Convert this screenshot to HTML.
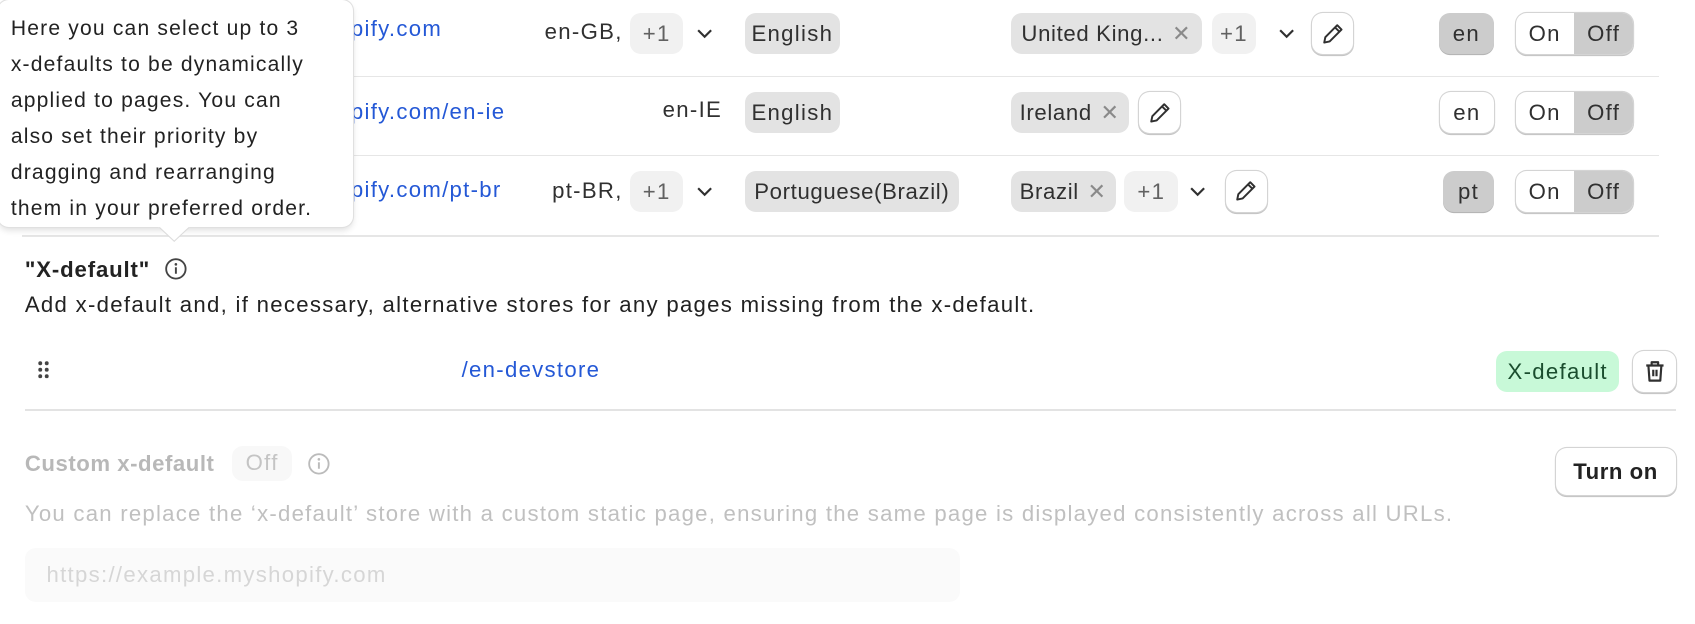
<!DOCTYPE html>
<html><head><meta charset="utf-8"><style>
html,body{margin:0;padding:0;background:#fff;overflow:hidden}
body{width:1568px;height:577px;zoom:1.081;position:relative;font-family:"Liberation Sans",Arial,sans-serif;font-size:20.5px;letter-spacing:1.2px;color:#303030;line-height:24px}
.a{position:absolute;white-space:nowrap}
.chip{position:absolute;height:38px;line-height:38px;border-radius:10px;background:#e3e3e3;box-sizing:border-box;text-align:center;white-space:nowrap;overflow:hidden}
.plus{background:#f1f1f1;color:#616161}
.btn{position:absolute;height:38px;border-radius:10px;background:#fff;box-shadow:0 0 0 1px #d4d4d4,0 1px 0 1px #c4c4c4;box-sizing:border-box;text-align:center;line-height:38px}
.line{position:absolute;height:1px;background:#e6e6e6}
.blue{color:#2458d6}
.x{color:#8a8a8a;margin-left:8px}
</style></head><body>
<div class="line" style="left:20px;width:1515px;top:70px"></div>
<div class="line" style="left:20px;width:1515px;top:143px"></div>
<div class="line" style="left:20px;width:1515px;top:217px;height:2px"></div>

<div class="a blue" style="left:312px;top:15px">opify.com</div>
<div class="a blue" style="left:312px;top:92px">opify.com/en-ie</div>
<div class="a blue" style="left:312px;top:164px">opify.com/pt-br</div>

<div class="a" style="right:992px;top:18px">en-GB,</div>
<div class="chip plus" style="left:583px;top:12px;width:49px">+1</div>
<svg class="a" style="left:644px;top:25px" width="16" height="12"><path d="M2 3l6 6 6-6" fill="none" stroke="#303030" stroke-width="2"/></svg>
<div class="chip" style="left:689px;top:12px;width:88px">English</div>

<div class="a" style="right:900px;top:90px">en-IE</div>
<div class="chip" style="left:689px;top:85px;width:88px">English</div>

<div class="a" style="right:992px;top:165px">pt-BR,</div>
<div class="chip plus" style="left:583px;top:158px;width:49px">+1</div>
<svg class="a" style="left:644px;top:171px" width="16" height="12"><path d="M2 3l6 6 6-6" fill="none" stroke="#303030" stroke-width="2"/></svg>
<div class="chip" style="left:689px;top:158px;width:198px;letter-spacing:0.6px">Portuguese(Brazil)</div>

<div class="chip" style="left:935px;top:12px;width:177px;letter-spacing:0.6px">United King...<span class="x">✕</span></div>
<div class="chip plus" style="left:1121px;top:12px;width:41px">+1</div>
<svg class="a" style="left:1182px;top:25px" width="16" height="12"><path d="M2 3l6 6 6-6" fill="none" stroke="#303030" stroke-width="2"/></svg>
<div class="btn" style="left:1214px;top:12px;width:38px"><svg width="22" height="22" style="margin-top:8px" viewBox="0 0 22 22"><path d="M15 3l4 4-11 11-5 1 1-5z M13 5l4 4" fill="none" stroke="#303030" stroke-width="1.8" stroke-linejoin="round"/></svg></div>

<div class="chip" style="left:935px;top:85px;width:109px;letter-spacing:0.6px">Ireland<span class="x">✕</span></div>
<div class="btn" style="left:1054px;top:85px;width:38px"><svg width="22" height="22" style="margin-top:8px" viewBox="0 0 22 22"><path d="M15 3l4 4-11 11-5 1 1-5z M13 5l4 4" fill="none" stroke="#303030" stroke-width="1.8" stroke-linejoin="round"/></svg></div>

<div class="chip" style="left:935px;top:158px;width:97px;letter-spacing:0.6px">Brazil<span class="x">✕</span></div>
<div class="chip plus" style="left:1040px;top:158px;width:50px">+1</div>
<svg class="a" style="left:1100px;top:171px" width="16" height="12"><path d="M2 3l6 6 6-6" fill="none" stroke="#303030" stroke-width="2"/></svg>
<div class="btn" style="left:1134px;top:158px;width:38px"><svg width="22" height="22" style="margin-top:8px" viewBox="0 0 22 22"><path d="M15 3l4 4-11 11-5 1 1-5z M13 5l4 4" fill="none" stroke="#303030" stroke-width="1.8" stroke-linejoin="round"/></svg></div>

<div class="chip" style="left:1331px;top:12px;width:51px;background:#cccccc;box-shadow:0 1px 0 #b5b5b5">en</div>
<div class="btn" style="left:1332px;top:85px;width:50px">en</div>
<div class="chip" style="left:1335px;top:158px;width:47px;background:#cccccc;box-shadow:0 1px 0 #b5b5b5">pt</div>

<div class="btn" style="left:1402px;top:12px;width:109px;overflow:hidden;text-align:left;white-space:nowrap"><span style="display:inline-block;width:54px;text-align:center">On</span><span style="display:inline-block;width:55px;text-align:center;background:#cccccc">Off</span></div>
<div class="btn" style="left:1402px;top:85px;width:109px;overflow:hidden;text-align:left;white-space:nowrap"><span style="display:inline-block;width:54px;text-align:center">On</span><span style="display:inline-block;width:55px;text-align:center;background:#cccccc">Off</span></div>
<div class="btn" style="left:1402px;top:158px;width:109px;overflow:hidden;text-align:left;white-space:nowrap"><span style="display:inline-block;width:54px;text-align:center">On</span><span style="display:inline-block;width:55px;text-align:center;background:#cccccc">Off</span></div>

<!-- tooltip -->
<div class="a" style="left:-2px;top:0;width:329px;height:210px;background:#fff;border-radius:10px;box-shadow:0 0 0 1px #e0e0e0,0 3px 6px rgba(0,0,0,.12);padding:10px 0 0 12px;box-sizing:border-box;line-height:33.4px;font-size:19.5px;letter-spacing:1.1px;color:#222">Here you can select up to 3<br>x-defaults to be dynamically<br>applied to pages. You can<br>also set their priority by<br>dragging and rearranging<br>them in your preferred order.</div>
<svg class="a" style="left:146px;top:208px" width="30" height="16"><path d="M0 1L15 15L30 1" fill="#fff" stroke="#dcdcdc"/><rect x="0" y="0" width="30" height="2" fill="#fff"/></svg>

<div class="a" style="left:23px;top:238px;font-weight:bold;color:#222;letter-spacing:0.8px">"X-default"</div>
<svg class="a" style="left:152px;top:238px" width="22" height="22" viewBox="0 0 22 22"><circle cx="11" cy="11" r="9" fill="none" stroke="#444" stroke-width="1.7"/><circle cx="11" cy="6.8" r="1.2" fill="#444"/><path d="M11 9.5v6" stroke="#444" stroke-width="1.8"/></svg>
<div class="a" style="left:23px;top:270px;color:#222">Add x-default and, if necessary, alternative stores for any pages missing from the x-default.</div>

<svg class="a" style="left:34px;top:333px" width="12" height="18"><g fill="#444"><circle cx="3" cy="3" r="1.8"/><circle cx="9" cy="3" r="1.8"/><circle cx="3" cy="9" r="1.8"/><circle cx="9" cy="9" r="1.8"/><circle cx="3" cy="15" r="1.8"/><circle cx="9" cy="15" r="1.8"/></g></svg>
<div class="a blue" style="left:427px;top:330px">/en-devstore</div>
<div class="chip" style="left:1384px;top:325px;width:114px;background:#c8f9d8;color:#1a4d2e">X-default</div>
<div class="btn" style="left:1511px;top:325px;width:39px"><svg width="22" height="24" style="margin-top:7px" viewBox="0 0 22 24"><path d="M3 6h16M8 6V3h6v3M5 6l1 14h10l1-14M9.5 10v6M12.5 10v6" fill="none" stroke="#303030" stroke-width="2" stroke-linejoin="round"/></svg></div>
<div class="line" style="left:23px;width:1527px;top:378px;height:2px;background:#e3e3e3"></div>

<div class="a" style="left:23px;top:417px;font-weight:bold;color:#b8b8b8;letter-spacing:0.5px">Custom x-default</div>
<div class="chip" style="left:215px;top:413px;height:32px;line-height:32px;width:55px;background:#f8f8f8;color:#c4c4c4">Off</div>
<svg class="a" style="left:284px;top:418px" width="22" height="22" viewBox="0 0 22 22"><circle cx="11" cy="11" r="9" fill="none" stroke="#bbb" stroke-width="1.7"/><circle cx="11" cy="6.8" r="1.2" fill="#bbb"/><path d="M11 9.5v6" stroke="#bbb" stroke-width="1.8"/></svg>
<div class="btn" style="left:1439px;top:414px;width:111px;height:44px;line-height:44px;font-weight:bold;color:#222;letter-spacing:0.5px">Turn on</div>
<div class="a" style="left:23px;top:463px;color:#c0c0c0;letter-spacing:1.15px">You can replace the ‘x-default’ store with a custom static page, ensuring the same page is displayed consistently across all URLs.</div>
<div class="a" style="left:23px;top:507px;width:865px;height:50px;background:#fafafa;border-radius:10px;line-height:50px;padding-left:20px;box-sizing:border-box;color:#d6d6d6">https://example.myshopify.com</div>
</body></html>
